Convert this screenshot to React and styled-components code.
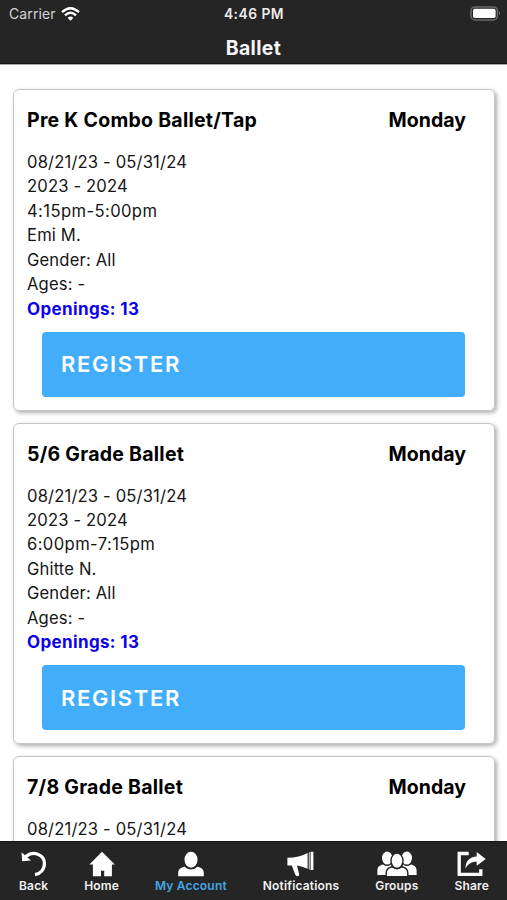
import React from "react";
import styled, { createGlobalStyle } from "styled-components";

const CLASSES = [
  {
    name: "Pre K Combo Ballet/Tap",
    dates: "08/21/23 - 05/31/24",
    season: "2023 - 2024",
    time: "4:15pm-5:00pm",
    info: ["Emi M.", "Gender: All", "Ages: -"],
    openings: 13,
  },
  {
    name: "5/6 Grade Ballet",
    dates: "08/21/23 - 05/31/24",
    season: "2023 - 2024",
    time: "6:00pm-7:15pm",
    info: ["Ghitte N.", "Gender: All", "Ages: -"],
    openings: 13,
  },
  { name: "7/8 Grade Ballet", dates: "08/21/23 - 05/31/24", info: [] },
];

const TABS = [
  { label: "Back", icon: <BackIcon /> },
  { label: "Home", icon: <HomeIcon /> },
  { label: "My Account", icon: <AccountIcon />, active: true },
  { label: "Notifications", icon: <MegaphoneIcon /> },
  { label: "Groups", icon: <GroupsIcon /> },
  { label: "Share", icon: <ShareIcon /> },
];

export default function App() {
  return (
    <Screen>
      <GlobalStyle />
      <Header>
        <StatusBar>
          <Carrier>
            Carrier
            <WifiIcon />
          </Carrier>
          <Clock>4:46 PM</Clock>
          <BatteryIcon />
        </StatusBar>
        <Title>Ballet</Title>
      </Header>
      <List>
        {CLASSES.map((c) => (
          <ClassCard key={c.name} {...c} />
        ))}
      </List>
      <TabBar>
        {TABS.map((tab) => (
          <Tab key={tab.label}>
            {tab.icon}
            <TabLabel $active={tab.active}>{tab.label}</TabLabel>
          </Tab>
        ))}
      </TabBar>
    </Screen>
  );
}

function ClassCard({ name, dates, season, time, info, openings }) {
  return (
    <Card>
      <CardHead>
        <ClassName>{name}</ClassName>
        <Day>Monday</Day>
      </CardHead>
      <Details>
        <div>{dates}</div>
        {season && <div>{season}</div>}
        {time && <Time>{time}</Time>}
        {info.map((line) => (
          <div key={line}>{line}</div>
        ))}
        {openings && <Openings>Openings: {openings}</Openings>}
      </Details>
      {openings && <Register>REGISTER</Register>}
    </Card>
  );
}

function WifiIcon() {
  return (
    <svg width="19" height="14" viewBox="0 0 19 14" fill="none" stroke="#fff" strokeWidth="2.3">
      <path d="M1 5.1Q9.5 -2.7 18 5.1" />
      <path d="M4 8.3Q9.5 3.3 15 8.3" />
      <path d="M6.7 10.9Q9.5 8.2 12.3 10.9L9.5 13.7Z" fill="#fff" stroke="none" />
    </svg>
  );
}

function BatteryIcon() {
  return (
    <svg width="31" height="15" viewBox="0 0 31 15">
      <rect x="1" y="0.9" width="26.4" height="13" rx="4" fill="none" stroke="#69696b" strokeWidth="1.5" />
      <rect x="3" y="2.8" width="22.6" height="9.2" rx="1.8" fill="#fff" />
      <path d="M29 5.2Q31 7.2 29 9.3Z" fill="#77777a" />
    </svg>
  );
}

function BackIcon() {
  return (
    <svg width="28" height="26" viewBox="0 0 28 26">
      <path d="M5.5 6C13 -1 24.4 3.5 24.4 12.5C24.4 18.5 20.5 22.8 15 23.6" fill="none" stroke="#fff" strokeWidth="3.2" />
      <path d="M1.5 1.2L2.2 10.2L11 9.4Z" fill="#fff" />
    </svg>
  );
}

function HomeIcon() {
  return (
    <svg width="28" height="26" viewBox="0 0 28 26" fill="#fff">
      <path d="M14 0.8L26.8 13.4H23.9V25.2H16.2V19.8H13V25.2H4.9V13.4H1.4Z" />
    </svg>
  );
}

function AccountIcon() {
  return (
    <svg width="28" height="26" viewBox="0 0 28 26" fill="#fff">
      <ellipse cx="14" cy="8.7" rx="6.5" ry="8" />
      <path d="M1.2 25.3V22C1.2 18 4 16.4 7.8 15.8C11 19.3 17 19.3 20.2 15.8C24 16.4 26.8 18 26.8 22V25.3Z" />
    </svg>
  );
}

function MegaphoneIcon() {
  return (
    <svg width="28" height="26" viewBox="0 0 28 26" fill="#fff">
      <path d="M0.4 6.8Q12.4 6.8 20.6 2.1V17.8Q15 15.2 10 14.4L12.2 23.2Q12.4 25 10.4 25.2Q8.7 25.2 8.2 23.6L4.8 14.4H0.4Z" />
      <path d="M21.7 1.6L23 1V18.8L21.7 18.2Z" opacity="0.65" />
      <path d="M23.6 0.8H26.4V19H23.6Z" />
    </svg>
  );
}

function GroupsIcon() {
  return (
    <svg width="40" height="26" viewBox="0 0 40 26" fill="#fff">
      <ellipse cx="10.2" cy="7.1" rx="5.2" ry="6.5" />
      <ellipse cx="29.8" cy="7.1" rx="5.2" ry="6.5" />
      <path d="M0.4 23.9V19.5C0.4 15.5 3 14.1 6.1 13.4Q10 16.4 14 13.4L17 23.9Z" />
      <path d="M39.6 23.9V19.5C39.6 15.5 37 14.1 33.9 13.4Q30 16.4 26 13.4L23 23.9Z" />
      <g stroke="#252525" strokeWidth="1.4">
        <path d="M9.2 25.8V22C9.2 18.1 12 16.5 15 15.8Q20 19.6 25 15.8C28 16.5 30.8 18.1 30.8 22V25.8Z" />
        <ellipse cx="20" cy="9.7" rx="6" ry="7.6" />
      </g>
    </svg>
  );
}

function ShareIcon() {
  return (
    <svg width="30" height="26" viewBox="0 0 30 26">
      <path d="M11.7 2.5H2.2V23.4H23.8V18.3" fill="none" stroke="#fff" strokeWidth="3.3" />
      <path d="M8.4 17.6C8.4 10.2 12.7 5.8 19.7 5.5V1L28.7 8L19.7 14.8V10.8C14.7 10.6 11 12.8 8.4 17.6Z" fill="#fff" />
    </svg>
  );
}

const GlobalStyle = createGlobalStyle`
  * {
    box-sizing: border-box;
  }
  body {
    margin: 0;
    background: #fff;
    font-family: Inter, "Liberation Sans", sans-serif;
  }
`;

const Screen = styled.div`
  display: flex;
  flex-direction: column;
  width: 507px;
  height: 900px;
  overflow: hidden;
  background: #fff;
`;

const Header = styled.header`
  flex: none;
  height: 64px;
  background: #252525;
  border-bottom: 1px solid #151515;
  box-shadow: 0 1px 0 #a5a5a5;
  color: #f5f5f5;
`;

const StatusBar = styled.div`
  display: grid;
  grid-template-columns: 1fr auto 1fr;
  align-items: center;
  height: 27px;
  padding: 0 6px 0 9px;
  > svg {
    justify-self: end;
  }
`;

const Carrier = styled.div`
  display: flex;
  align-items: center;
  gap: 5px;
  font-size: 14px;
  letter-spacing: 0.12px;
  color: #d4d4d4;
`;

const Clock = styled.div`
  margin-right: 2px;
  font-size: 13.8px;
  font-weight: 600;
  letter-spacing: 0.5px;
  color: #ececec;
`;

const Title = styled.h1`
  margin: 0;
  font-size: 19.4px;
  line-height: 43px;
  font-weight: 700;
  letter-spacing: 0.4px;
  text-align: center;
`;

const List = styled.main`
  flex: 1;
  min-height: 0;
  display: flex;
  flex-direction: column;
  gap: 12px;
  padding: 25px 12px 0 13px;
  overflow: hidden;
`;

const Card = styled.section`
  flex: none;
  height: 321.5px;
  padding: 17px 28px 0 13px;
  border: 1.5px solid #c6c6c6;
  border-radius: 6px;
  box-shadow: 2px 2px 4px rgba(0, 0, 0, 0.32);
`;

const CardHead = styled.div`
  display: flex;
  justify-content: space-between;
  font-size: 19.5px;
  line-height: 26px;
  font-weight: 650;
  color: #000;
`;

const ClassName = styled.span`
  letter-spacing: 0.26px;
`;

const Day = styled.span`
  letter-spacing: 0.02px;
`;

const Details = styled.div`
  margin-top: 17px;
  font-size: 16.6px;
  line-height: 24.45px;
  letter-spacing: 0.16px;
  color: #151515;
`;

const Time = styled.div`
  letter-spacing: 0.4px;
`;

const Openings = styled.div`
  font-weight: 650;
  font-size: 17px;
  letter-spacing: 0.36px;
  color: #0d00ea;
`;

const Register = styled.button`
  display: block;
  width: calc(100% - 16px);
  height: 65px;
  margin: 10.5px 0 0 15px;
  padding: 0 19px;
  border: 0;
  border-radius: 4px;
  background: #42aefb;
  color: #fff;
  font: 600 22px Inter, sans-serif;
  letter-spacing: 1.65px;
  text-align: left;
`;

const TabBar = styled.nav`
  flex: none;
  display: flex;
  justify-content: space-between;
  height: 59px;
  padding: 9px 18px 0 19px;
  border-top: 1px solid #151515;
  background: #252525;
`;

const Tab = styled.div`
  display: flex;
  flex-direction: column;
  align-items: center;
`;

const TabLabel = styled.span`
  margin-top: 1px;
  font-size: 12px;
  line-height: 16px;
  font-weight: 600;
  letter-spacing: 0.18px;
  white-space: nowrap;
  color: ${(p) => (p.$active ? "#45a5e6" : "#f0f0f0")};
`;
